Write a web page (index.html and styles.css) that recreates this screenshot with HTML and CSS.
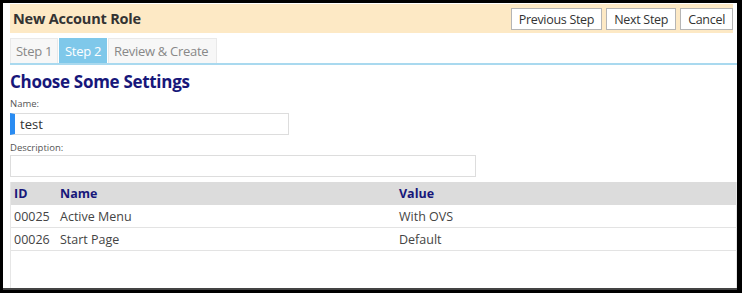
FILE: index.html
```html
<!DOCTYPE html>
<html lang="en">
<head>
    <meta charset="UTF-8">
    <title>New Account Role</title>
    <link rel="stylesheet" href="styles.css">
</head>
<body>
    <div class="frame">
        <div class="titlebar">
            <h1>New Account Role</h1>
            <div class="actions">
                <button>Previous Step</button>
                <button>Next Step</button>
                <button>Cancel</button>
            </div>
        </div>
        <div class="tabs">
            <span class="tab">Step 1</span>
            <span class="tab active">Step 2</span>
            <span class="tab">Review &amp; Create</span>
        </div>
        <div class="settings">
            <h2>Choose Some Settings</h2>
            <label>Name:</label>
            <div class="field name-field">test</div>
            <label>Description:</label>
            <div class="field desc-field"></div>
        </div>
        <div class="grid">
            <table>
                <thead>
                    <tr><th class="col-id">ID</th><th class="col-name">Name</th><th>Value</th></tr>
                </thead>
                <tbody>
                    <tr><td>00025</td><td>Active Menu</td><td>With OVS</td></tr>
                    <tr><td>00026</td><td>Start Page</td><td>Default</td></tr>
                </tbody>
            </table>
        </div>
    </div>
</body>
</html>
```

FILE: styles.css
```css
html, body {
    margin: 0;
    height: 293px;
    background: #000;
    overflow: hidden;
}

body {
    font-family: "Open Sans", "Noto Sans", sans-serif;
    color: #444;
}

.frame {
    margin: 3px 5px 0 3px;
    height: 287px;
    background: #fff;
    border-bottom: 2px solid #444;
    padding: 1px 0 0 7px;
    box-sizing: border-box;
    display: flex;
    flex-direction: column;
}

.titlebar {
    display: flex;
    justify-content: space-between;
    align-items: center;
    height: 29px;
    background: #fde9c5;
    margin-right: 4px;
}

.titlebar h1 {
    margin: 0 0 0 3px;
    font-size: 14.5px;
    font-weight: 700;
    color: #333;
    letter-spacing: -0.2px;
}

.actions {
    display: flex;
    gap: 4px;
    padding-top: 1px;
}

.actions button {
    font-family: inherit;
    font-size: 12.5px;
    color: #333;
    background: #fff;
    border: 1px solid #b5b5b5;
    height: 22px;
    padding: 0 7px;
    letter-spacing: -0.3px;
}

.tabs {
    display: flex;
    margin-top: 5px;
    border-bottom: 2px solid #a9d9ef;
}

.tab {
    font-size: 13px;
    line-height: 24px;
    padding: 0 5px;
    color: #888;
    background: #f7f7f7;
    border: 1px solid #e9e9e9;
    border-bottom: 0;
    letter-spacing: -0.3px;
}

.tab + .tab {
    margin-left: 1px;
}

.tab:last-child {
    padding-right: 8px;
}

.tab.active {
    background: #7fc8ea;
    border-color: #7fc8ea;
    color: #fff;
}

.settings h2 {
    margin: 7px 0 6px;
    font-size: 17px;
    font-weight: 700;
    color: #17177a;
    letter-spacing: -0.3px;
    line-height: 20px;
}

.settings label {
    display: block;
    font-size: 9.5px;
    color: #555;
    line-height: 12px;
}

.field {
    box-sizing: border-box;
    border: 1px solid #ddd;
    height: 22px;
    margin: 3px 0 7px;
    font-size: 13px;
    line-height: 20px;
    color: #333;
}

.name-field {
    width: 279px;
    border-left: 5px solid #2a8cf2;
    padding-left: 5px;
}

.desc-field {
    width: 466px;
    margin: 1px 0 5px;
}

.grid {
    flex: 1;
    border-left: 1px solid #e6e6e6;
    border-right: 1px solid #e6e6e6;
}

table {
    width: 100%;
    border-collapse: collapse;
    font-size: 12.5px;
}

th {
    background: #dcdcdc;
    color: #17177a;
    text-align: left;
    font-weight: 700;
    height: 23px;
    padding: 0 3px;
}

td {
    height: 22px;
    padding: 0 3px;
    border-bottom: 1px solid #e3e3e3;
    color: #444;
}

.col-id {
    width: 40px;
}

.col-name {
    width: 333px;
}
```
